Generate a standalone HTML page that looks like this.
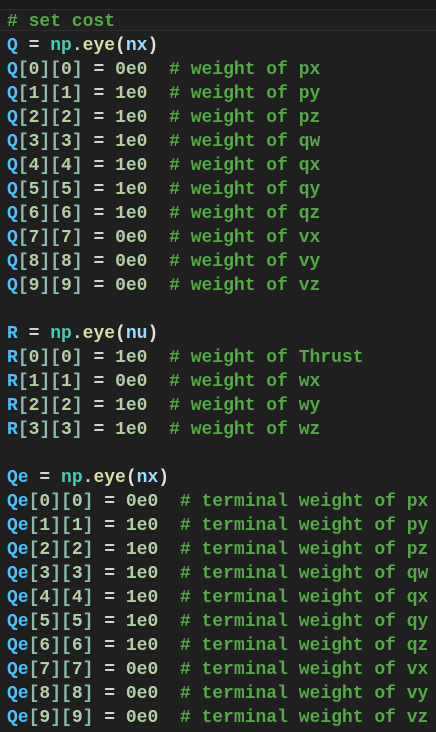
<!DOCTYPE html><html><head><style>
html,body{margin:0;padding:0;background:#1f1f1f;width:436px;height:732px;overflow:hidden}
.top{position:absolute;left:0;top:0;width:436px;height:9px;background:#1a1a1a}
.cur{position:absolute;left:0;top:9px;width:436px;height:22px;border-top:1px solid #2c2c2c;border-bottom:1px solid #2c2c2c;box-sizing:border-box}
pre{position:absolute;left:7px;top:10px;margin:0;font:bold 18px/24px "Liberation Mono",monospace;color:#d4d4d4;letter-spacing:0}
.c{color:#57a64a}.v{color:#4fc1ff}.n{color:#b5cea8}.m{color:#4ec9b0}.f{color:#dcdcaa}.p{color:#9cdcfe}.b{color:#e0e0e0}.k{color:#8fb8b0}
</style></head><body><div class="top"></div><div class="cur"></div>
<pre><span class="c"># set cost</span>
<span class="v">Q</span> = <span class="m">np</span>.<span class="f">eye</span><span class="b">(</span><span class="p">nx</span><span class="b">)</span>
<span class="v">Q</span><span class="k">[</span><span class="n">0</span><span class="k">][</span><span class="n">0</span><span class="k">]</span> = <span class="n">0e0</span>  <span class="c"># weight of px</span>
<span class="v">Q</span><span class="k">[</span><span class="n">1</span><span class="k">][</span><span class="n">1</span><span class="k">]</span> = <span class="n">1e0</span>  <span class="c"># weight of py</span>
<span class="v">Q</span><span class="k">[</span><span class="n">2</span><span class="k">][</span><span class="n">2</span><span class="k">]</span> = <span class="n">1e0</span>  <span class="c"># weight of pz</span>
<span class="v">Q</span><span class="k">[</span><span class="n">3</span><span class="k">][</span><span class="n">3</span><span class="k">]</span> = <span class="n">1e0</span>  <span class="c"># weight of qw</span>
<span class="v">Q</span><span class="k">[</span><span class="n">4</span><span class="k">][</span><span class="n">4</span><span class="k">]</span> = <span class="n">1e0</span>  <span class="c"># weight of qx</span>
<span class="v">Q</span><span class="k">[</span><span class="n">5</span><span class="k">][</span><span class="n">5</span><span class="k">]</span> = <span class="n">1e0</span>  <span class="c"># weight of qy</span>
<span class="v">Q</span><span class="k">[</span><span class="n">6</span><span class="k">][</span><span class="n">6</span><span class="k">]</span> = <span class="n">1e0</span>  <span class="c"># weight of qz</span>
<span class="v">Q</span><span class="k">[</span><span class="n">7</span><span class="k">][</span><span class="n">7</span><span class="k">]</span> = <span class="n">0e0</span>  <span class="c"># weight of vx</span>
<span class="v">Q</span><span class="k">[</span><span class="n">8</span><span class="k">][</span><span class="n">8</span><span class="k">]</span> = <span class="n">0e0</span>  <span class="c"># weight of vy</span>
<span class="v">Q</span><span class="k">[</span><span class="n">9</span><span class="k">][</span><span class="n">9</span><span class="k">]</span> = <span class="n">0e0</span>  <span class="c"># weight of vz</span>

<span class="v">R</span> = <span class="m">np</span>.<span class="f">eye</span><span class="b">(</span><span class="p">nu</span><span class="b">)</span>
<span class="v">R</span><span class="k">[</span><span class="n">0</span><span class="k">][</span><span class="n">0</span><span class="k">]</span> = <span class="n">1e0</span>  <span class="c"># weight of Thrust</span>
<span class="v">R</span><span class="k">[</span><span class="n">1</span><span class="k">][</span><span class="n">1</span><span class="k">]</span> = <span class="n">0e0</span>  <span class="c"># weight of wx</span>
<span class="v">R</span><span class="k">[</span><span class="n">2</span><span class="k">][</span><span class="n">2</span><span class="k">]</span> = <span class="n">1e0</span>  <span class="c"># weight of wy</span>
<span class="v">R</span><span class="k">[</span><span class="n">3</span><span class="k">][</span><span class="n">3</span><span class="k">]</span> = <span class="n">1e0</span>  <span class="c"># weight of wz</span>

<span class="v">Qe</span> = <span class="m">np</span>.<span class="f">eye</span><span class="b">(</span><span class="p">nx</span><span class="b">)</span>
<span class="v">Qe</span><span class="k">[</span><span class="n">0</span><span class="k">][</span><span class="n">0</span><span class="k">]</span> = <span class="n">0e0</span>  <span class="c"># terminal weight of px</span>
<span class="v">Qe</span><span class="k">[</span><span class="n">1</span><span class="k">][</span><span class="n">1</span><span class="k">]</span> = <span class="n">1e0</span>  <span class="c"># terminal weight of py</span>
<span class="v">Qe</span><span class="k">[</span><span class="n">2</span><span class="k">][</span><span class="n">2</span><span class="k">]</span> = <span class="n">1e0</span>  <span class="c"># terminal weight of pz</span>
<span class="v">Qe</span><span class="k">[</span><span class="n">3</span><span class="k">][</span><span class="n">3</span><span class="k">]</span> = <span class="n">1e0</span>  <span class="c"># terminal weight of qw</span>
<span class="v">Qe</span><span class="k">[</span><span class="n">4</span><span class="k">][</span><span class="n">4</span><span class="k">]</span> = <span class="n">1e0</span>  <span class="c"># terminal weight of qx</span>
<span class="v">Qe</span><span class="k">[</span><span class="n">5</span><span class="k">][</span><span class="n">5</span><span class="k">]</span> = <span class="n">1e0</span>  <span class="c"># terminal weight of qy</span>
<span class="v">Qe</span><span class="k">[</span><span class="n">6</span><span class="k">][</span><span class="n">6</span><span class="k">]</span> = <span class="n">1e0</span>  <span class="c"># terminal weight of qz</span>
<span class="v">Qe</span><span class="k">[</span><span class="n">7</span><span class="k">][</span><span class="n">7</span><span class="k">]</span> = <span class="n">0e0</span>  <span class="c"># terminal weight of vx</span>
<span class="v">Qe</span><span class="k">[</span><span class="n">8</span><span class="k">][</span><span class="n">8</span><span class="k">]</span> = <span class="n">0e0</span>  <span class="c"># terminal weight of vy</span>
<span class="v">Qe</span><span class="k">[</span><span class="n">9</span><span class="k">][</span><span class="n">9</span><span class="k">]</span> = <span class="n">0e0</span>  <span class="c"># terminal weight of vz</span></pre>
</body></html>
